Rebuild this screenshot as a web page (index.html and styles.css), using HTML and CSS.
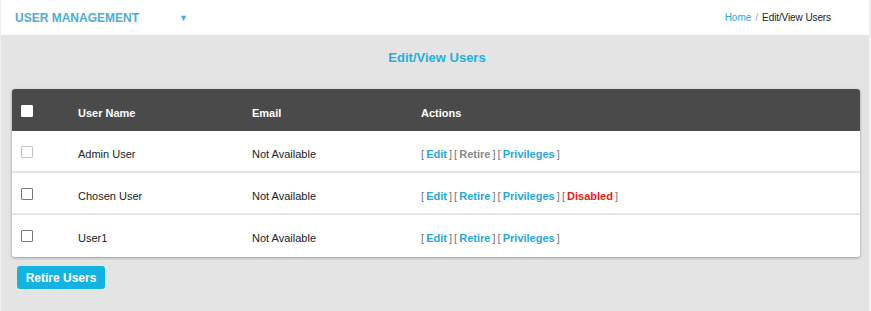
FILE: index.html
```html
<!DOCTYPE html>
<html>
<head>
<meta charset="utf-8">
<link rel="stylesheet" href="styles.css">
</head>
<body>
<div class="page">
  <header class="topbar">
    <div class="brand">
      <span class="brand-title">USER MANAGEMENT</span>
      <span class="caret">&#9660;</span>
    </div>
    <nav class="crumbs">
      <a class="crumb-link">Home</a>
      <span class="sep">/</span>
      <span class="crumb-current">Edit/View Users</span>
    </nav>
  </header>
  <main class="content">
    <h1 class="title">Edit/View Users</h1>
    <div class="card">
      <div class="row head">
        <div class="c-check"><span class="box white"></span></div>
        <div class="c-name">User Name</div>
        <div class="c-email">Email</div>
        <div class="c-actions">Actions</div>
      </div>
      <div class="row">
        <div class="c-check"><span class="box faint"></span></div>
        <div class="c-name">Admin User</div>
        <div class="c-email">Not Available</div>
        <div class="c-actions"><span class="br">[</span> <a class="lnk">Edit</a> <span class="br">]</span> <span class="br">[</span> <span class="off">Retire</span> <span class="br">]</span> <span class="br">[</span> <a class="lnk">Privileges</a> <span class="br">]</span></div>
      </div>
      <div class="row">
        <div class="c-check"><span class="box"></span></div>
        <div class="c-name">Chosen User</div>
        <div class="c-email">Not Available</div>
        <div class="c-actions"><span class="br">[</span> <a class="lnk">Edit</a> <span class="br">]</span> <span class="br">[</span> <a class="lnk">Retire</a> <span class="br">]</span> <span class="br">[</span> <a class="lnk">Privileges</a> <span class="br">]</span> <span class="br">[</span> <span class="red">Disabled</span> <span class="br">]</span></div>
      </div>
      <div class="row last">
        <div class="c-check"><span class="box"></span></div>
        <div class="c-name">User1</div>
        <div class="c-email">Not Available</div>
        <div class="c-actions"><span class="br">[</span> <a class="lnk">Edit</a> <span class="br">]</span> <span class="br">[</span> <a class="lnk">Retire</a> <span class="br">]</span> <span class="br">[</span> <a class="lnk">Privileges</a> <span class="br">]</span></div>
      </div>
    </div>
    <div class="footer-actions">
      <button class="btn">Retire Users</button>
    </div>
  </main>
</div>
</body>
</html>
```
FILE: styles.css
```css
* { box-sizing: border-box; }
html, body { margin: 0; padding: 0; }
body {
  font-family: "Liberation Sans", Arial, sans-serif;
  font-size: 11px;
  color: #222;
  background: #e4e4e4;
}
.page {
  width: 871px;
  height: 311px;
  display: flex;
  flex-direction: column;
  border-left: 1px solid #efefef;
  border-right: 2px solid #f0f0f0;
}
.topbar {
  height: 35px;
  background: #fff;
  display: flex;
  align-items: center;
  justify-content: space-between;
  padding: 0 38px 0 14px;
  flex-shrink: 0;
}
.brand { display: flex; align-items: center; }
.brand-title {
  font-weight: bold;
  font-size: 12px;
  color: #4aaedb;
}
.caret {
  color: #4aaedb;
  font-size: 9px;
  margin-left: 40px;
  margin-top: 1px;
}
.crumbs { font-size: 10px; display: flex; align-items: center; }
.crumb-link { color: #29a8e0; }
.sep { color: #aaa; margin: 0 4px; }
.crumb-current { color: #222; letter-spacing: -0.1px; }
.content {
  flex: 1;
  padding: 0 9px 0 11px;
}
.title {
  margin: 15px 0 23px;
  text-align: center;
  font-size: 13px;
  font-weight: bold;
  color: #1fb0de;
  line-height: 16px;
  padding-left: 2px;
}
.card {
  background: #fff;
  border-radius: 3px;
  box-shadow: 0 1px 3px rgba(0,0,0,0.35);
  overflow: hidden;
}
.row {
  display: grid;
  grid-template-columns: 66px 174px 169px 1fr;
  align-items: center;
  height: 42px;
  border-bottom: 2px solid #e6e6e6;
  font-size: 11px;
}
.row.last { border-bottom: none; }
.row.head {
  background: #4a4a4a;
  color: #fff;
  font-weight: bold;
  height: 42px;
  border-bottom: none;
  padding-bottom: 0;
}
.row > div { padding-top: 5px; }
.row.last > div { padding-top: 3px; }
.c-check { padding-left: 9px; display: flex; align-items: center; }
.box {
  display: inline-block;
  width: 12px;
  height: 12px;
  border: 1px solid #777;
  background: #fff;
  border-radius: 1px;
  margin-top: -3px;
}
.box.white { border-color: #fff; margin-top: -4px; }
.box.faint { border-color: #c4c4c4; }
.c-actions { font-size: 11px; font-weight: bold; word-spacing: -1px; }
.br { color: #777; font-weight: normal; }
.lnk { color: #26a8dc; }
.off { color: #8a8a8a; }
.red { color: #f01818; }
.footer-actions { padding: 9px 0 0 5px; }
.btn {
  font-family: "Liberation Sans", Arial, sans-serif;
  font-size: 12px;
  font-weight: bold;
  color: #fff;
  background: #12b3e0;
  border: none;
  border-radius: 3px;
  width: 88px;
  height: 23px;
  padding: 0;
}
```
